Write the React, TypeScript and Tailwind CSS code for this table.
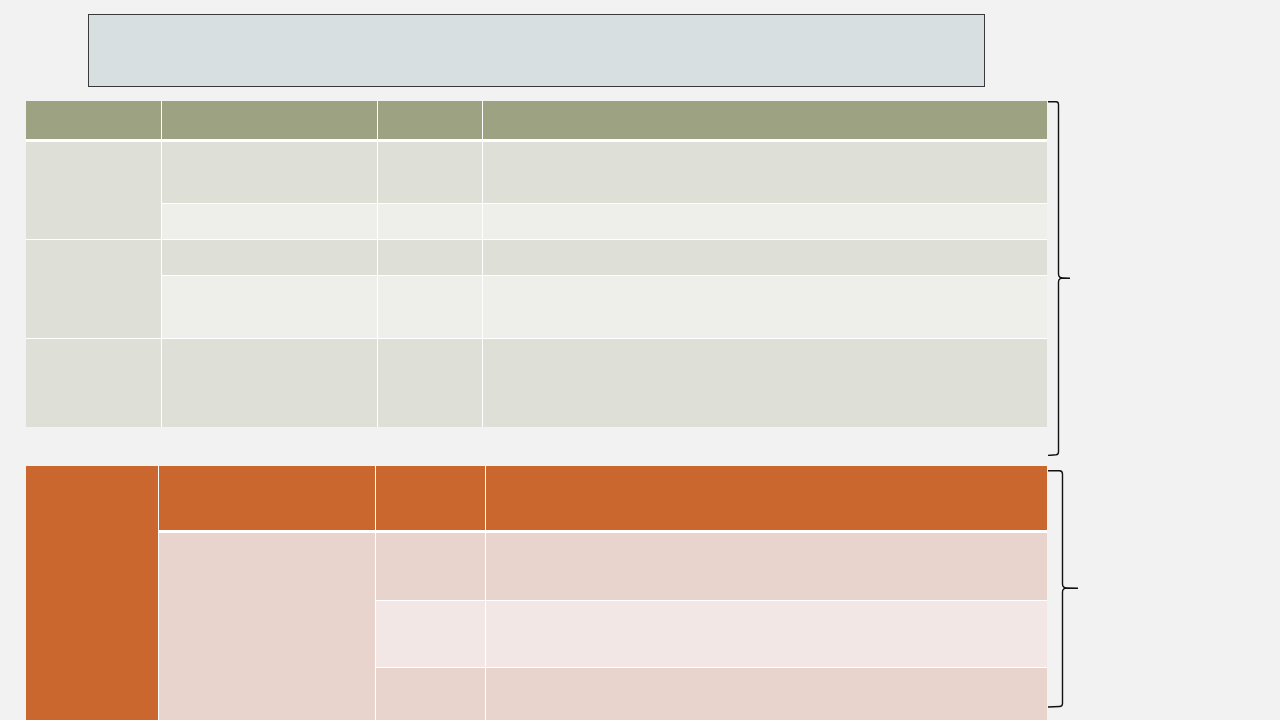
export default function App() {
  return (
    <div className="h-screen w-full overflow-hidden bg-[#f2f2f2] font-['Liberation_Sans',sans-serif]">
      {/* Title box */}
      <div className="ml-[88px] mt-[14px] h-[73px] w-[897px] border border-[#3a3a3a] bg-[#d8dfe0]" />

      {/* Table 1 + brace */}
      <div className="ml-[26px] mt-[14px] flex items-start">
        <div className="flex w-[1021px] flex-col gap-[3px] bg-white">
          <div className="grid h-[38px] grid-cols-[135px_215px_104px_1fr] gap-px">
            <div className="bg-[#9da382]" />
            <div className="bg-[#9da382]" />
            <div className="bg-[#9da382]" />
            <div className="bg-[#9da382]" />
          </div>
          <div className="grid grid-cols-[135px_215px_104px_1fr] grid-rows-[61px_35px_35px_62px_88px] gap-px">
            <div className="row-span-2 bg-[#dedfd7]" />
            <div className="bg-[#dedfd7]" />
            <div className="bg-[#dedfd7]" />
            <div className="bg-[#dedfd7]" />
            <div className="bg-[#eeefea]" />
            <div className="bg-[#eeefea]" />
            <div className="bg-[#eeefea]" />

            <div className="row-span-2 bg-[#dedfd7]" />
            <div className="bg-[#dedfd7]" />
            <div className="bg-[#dedfd7]" />
            <div className="bg-[#dedfd7]" />
            <div className="bg-[#eeefea]" />
            <div className="bg-[#eeefea]" />
            <div className="bg-[#eeefea]" />

            <div className="bg-[#dedfd7]" />
            <div className="bg-[#dedfd7]" />
            <div className="bg-[#dedfd7]" />
            <div className="bg-[#dedfd7]" />
          </div>
        </div>
        <svg width="30" height="355" viewBox="0 0 30 355" className="shrink-0">
          <path
            d="M1 0.8 H9 Q11.5 0.8 11.5 3.5 V173 Q11.5 177 16 177 L23 177.3 M16 177 Q11.5 177 11.5 181 V351 Q11.5 353.5 9 353.8 L1 354.5"
            fill="none"
            stroke="#111"
            strokeWidth="1.4"
          />
        </svg>
      </div>

      {/* Table 2 + brace */}
      <div className="ml-[26px] mt-[10px] flex items-start">
        <div className="flex w-[1021px] gap-px bg-white">
          <div className="w-[132px] shrink-0 bg-[#c9672f]" />
          <div className="flex flex-1 flex-col gap-[3px]">
            <div className="grid h-[64px] grid-cols-[216px_109px_1fr] gap-px">
              <div className="bg-[#c9672f]" />
              <div className="bg-[#c9672f]" />
              <div className="bg-[#c9672f]" />
            </div>
            <div className="grid grid-cols-[216px_109px_1fr] grid-rows-[67px_66px_67px] gap-px">
              <div className="row-span-3 bg-[#e8d3cd]" />
              <div className="bg-[#e8d3cd]" />
              <div className="bg-[#e8d3cd]" />
              <div className="bg-[#f3e7e5]" />
              <div className="bg-[#f3e7e5]" />
              <div className="bg-[#e8d3cd]" />
              <div className="bg-[#e8d3cd]" />
            </div>
          </div>
        </div>
        <svg width="34" height="245" viewBox="0 0 34 245" className="shrink-0">
          <path
            d="M1 4.8 H12.5 Q15.5 4.8 15.5 8 V118 Q15.5 122 20 122 L31 122.3 M20 122 Q15.5 122 15.5 126 V237.5 Q15.5 240.5 12.5 240.5 L1 241"
            fill="none"
            stroke="#111"
            strokeWidth="1.4"
          />
        </svg>
      </div>
    </div>
  );
}
